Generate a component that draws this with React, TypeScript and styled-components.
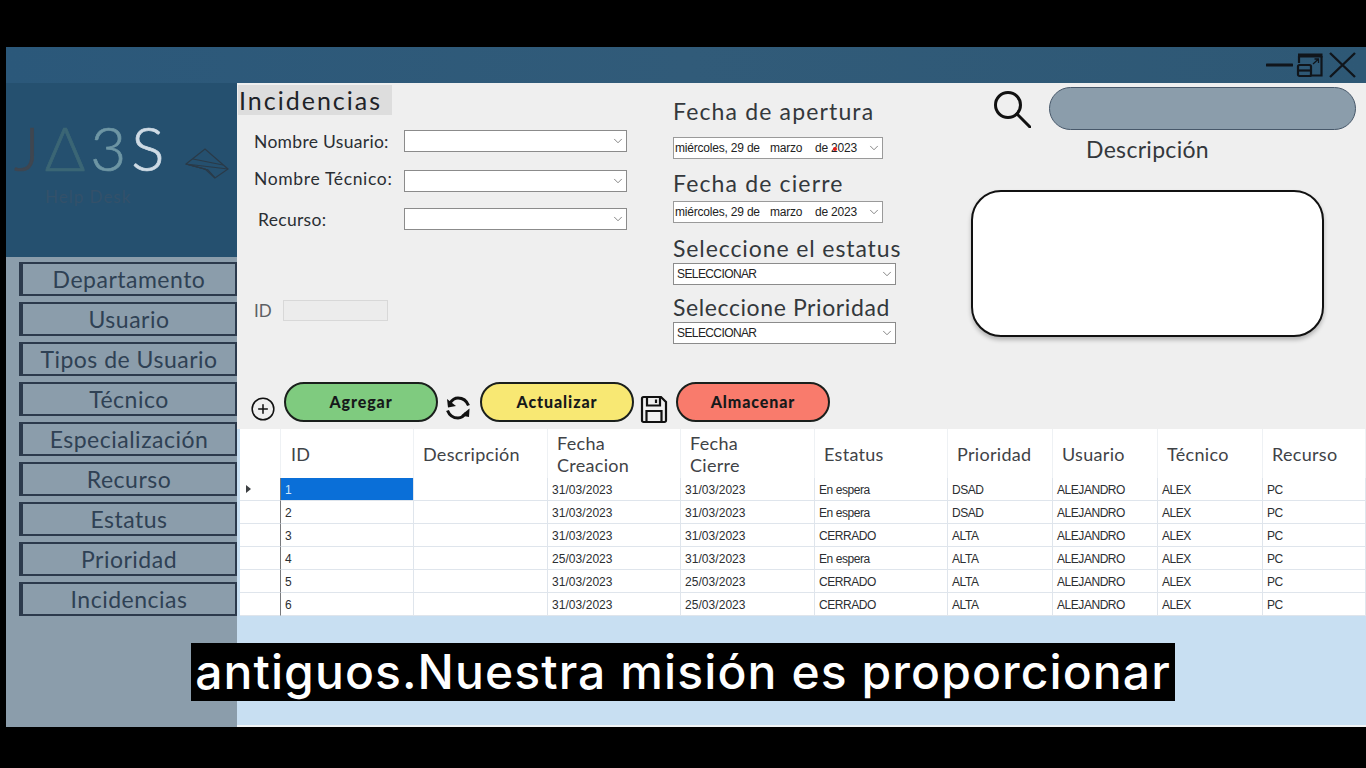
import React from 'react';
import styled, { createGlobalStyle } from 'styled-components';
import { ChevronDown, CirclePlus } from 'lucide-react';

const GlobalStyle = createGlobalStyle`
  html, body {
    margin: 0;
    padding: 0;
    background: #000;
    overflow: hidden;
  }
  * {
    box-sizing: border-box;
  }
`;

const gothic = `Lato, "Open Sans", sans-serif`;
const arial = `"Liberation Sans", Arial, sans-serif`;

const Screen = styled.div`
  position: relative;
  width: 1366px;
  height: 768px;
  padding: 47px 0 41px 6px;
  background: #000;
`;

const Window = styled.div`
  display: flex;
  flex-direction: column;
  height: 100%;
  background: #efefef;
`;

const TitleBar = styled.div`
  display: flex;
  align-items: center;
  justify-content: flex-end;
  gap: 3px;
  height: 36px;
  padding-right: 9px;
  background: linear-gradient(90deg, #2b587a, #315b79 50%, #2e5875);
`;

const Body = styled.div`
  display: flex;
  flex: 1;
  min-height: 0;
`;

const Sidebar = styled.aside`
  display: flex;
  flex-direction: column;
  width: 231px;
  flex: none;
  background: #8b9dab;
`;

const LogoPanel = styled.div`
  display: flex;
  flex-direction: column;
  height: 174px;
  padding: 34px 0 0 8px;
  background: #25506f;
`;

const LogoRow = styled.div`
  display: flex;
  align-items: flex-start;
  gap: 16px;
`;

const LogoWord = styled.div`
  display: flex;
  font-family: ${gothic};
  font-size: 62px;
  font-weight: 300;
  line-height: 60px;
  letter-spacing: 5px;
  -webkit-text-stroke: 0.7px currentColor;
`;

const LogoLetter = styled.span<{ $color: string }>`
  color: ${(p) => p.$color};
`;

const PlaneSlot = styled.span`
  margin-top: 31px;
`;

const LogoTagline = styled.div`
  margin: 3px 0 0 31px;
  color: #33516a;
  font-family: ${gothic};
  font-size: 17px;
  line-height: 20px;
  letter-spacing: 1px;
`;

const Menu = styled.nav`
  display: flex;
  flex-direction: column;
  gap: 6px;
  padding: 5px 0 0 13px;
`;

const MenuButton = styled.div`
  display: flex;
  align-items: center;
  justify-content: center;
  height: 34px;
  border: 2px solid #2c3a4c;
  border-left-width: 4px;
  color: #2f4154;
  background: #8b9dab;
  font-family: ${gothic};
  font-size: 23px;
  letter-spacing: 0.5px;
`;

const Main = styled.main`
  display: flex;
  flex: 1;
  flex-direction: column;
  min-width: 0;
`;

const TopArea = styled.div`
  display: flex;
  height: 297px;
`;

const LeftColumn = styled.section`
  width: 436px;
  flex: none;
`;

const PageTitle = styled.h1`
  display: flex;
  align-items: center;
  width: 154px;
  height: 30px;
  margin: 2px 0 0 1px;
  padding-left: 1px;
  color: #1e2328;
  background: #dddddd;
  font-family: ${gothic};
  font-size: 25px;
  font-weight: 400;
  letter-spacing: 2px;
`;

const Fields = styled.div`
  display: flex;
  flex-direction: column;
  padding: 15px 0 0 17px;
`;

const FieldRow = styled.div<{ $top: number }>`
  display: grid;
  grid-template-columns: 150px 223px;
  grid-template-rows: 22px;
  align-items: center;
  margin-top: ${(p) => p.$top}px;
`;

const FieldLabel = styled.label<{ $indent?: number; $raise?: number; $spacing?: number }>`
  margin-bottom: ${(p) => p.$raise ?? 0}px;
  padding-left: ${(p) => p.$indent ?? 0}px;
  color: #2a2e33;
  font-family: ${gothic};
  font-size: 17.5px;
  letter-spacing: ${(p) => p.$spacing ?? 0.3}px;
  white-space: nowrap;
`;

const Combo = styled.div`
  display: flex;
  align-items: center;
  justify-content: space-between;
  height: 22px;
  padding: 0 1px 0 2px;
  border: 1px solid #8b8b8b;
  color: #222;
  background: #fff;
  font-family: ${arial};
  font-size: 12px;
  letter-spacing: -0.6px;
  white-space: nowrap;
`;

const IdRow = styled.div`
  display: flex;
  align-items: center;
  gap: 11px;
  margin: 70px 0 0 0;
`;

const IdLabel = styled.label`
  color: #5d6064;
  font-family: ${gothic};
  font-size: 17px;
`;

const IdInput = styled.div`
  width: 105px;
  height: 21px;
  border: 1px solid #d8d8d8;
  background: #ececec;
`;

const MiddleColumn = styled.section`
  position: relative;
  display: flex;
  flex-direction: column;
  align-items: flex-start;
  width: 298px;
  flex: none;
`;

const SectionLabel = styled.div<{ $top: number; $spacing?: number }>`
  margin-top: ${(p) => p.$top}px;
  color: #34383c;
  font-family: ${gothic};
  font-size: 23px;
  line-height: 28px;
  letter-spacing: ${(p) => p.$spacing ?? 1.15}px;
  white-space: nowrap;
`;

const DateBox = styled(Combo)<{ $top: number }>`
  width: 210px;
  margin-top: ${(p) => p.$top}px;
  padding-left: 1px;
  border-color: #9a9a9a;
  letter-spacing: -0.2px;
`;

const DateParts = styled.span`
  display: grid;
  grid-template-columns: 95px 45px auto;
`;

const SelectBox = styled(Combo)`
  width: 223px;
  margin-top: 1px;
  padding-left: 3px;
`;

const CursorDot = styled.span`
  position: absolute;
  left: 160px;
  top: 64px;
  width: 4px;
  height: 4px;
  border-radius: 50%;
  background: #e21b1b;
`;

const RightColumn = styled.section`
  display: flex;
  flex-direction: column;
  flex: 1;
`;

const SearchRow = styled.div`
  display: flex;
  align-items: center;
  gap: 18px;
  margin: 4px 0 0 22px;
`;

const SearchField = styled.div`
  width: 307px;
  height: 43px;
  border: 1px solid #47586a;
  border-radius: 22px;
  background: #8b9dab;
`;

const DescriptionTitle = styled.div`
  width: 353px;
  margin-top: 6px;
  color: #34383c;
  text-align: center;
  font-family: ${gothic};
  font-size: 23px;
  line-height: 27px;
  letter-spacing: 0.3px;
`;

const DescriptionBox = styled.div`
  width: 353px;
  height: 147px;
  margin-top: 27px;
  border: 2px solid #111;
  border-radius: 30px;
  background: #fff;
  box-shadow: 0 3px 4px rgba(0, 0, 0, 0.25);
`;

const Actions = styled.div`
  display: flex;
  align-items: flex-start;
  height: 49px;
  padding: 2px 0 0 13px;
  flex: none;
`;

const ActionIcon = styled.span<{ $width: number; $top: number; $left: number; $right: number }>`
  display: flex;
  justify-content: center;
  width: ${(p) => p.$width}px;
  margin: ${(p) => p.$top}px ${(p) => p.$right}px 0 ${(p) => p.$left}px;
  color: #111;
`;

const ActionButton = styled.div<{ $bg: string }>`
  display: flex;
  align-items: center;
  justify-content: center;
  width: 154px;
  height: 40px;
  padding-bottom: 1px;
  border: 2px solid #1a1f1c;
  border-radius: 20px;
  color: #16191a;
  background: ${(p) => p.$bg};
  font-family: ${gothic};
  font-size: 16px;
  font-weight: 900;
  letter-spacing: 0.9px;
`;

const GridArea = styled.div`
  display: flex;
  flex: 1;
  flex-direction: column;
  padding-left: 3px;
  background: #c8dff2;
  border-bottom: 2px solid #f1f4f6;
`;

const Table = styled.div`
  display: grid;
  grid-template-columns: 41px 133px 134px 133px 134px 133px 105px 105px 105px 103px;
  background: #fff;
`;

const HeadCell = styled.div<{ $inset: number }>`
  display: flex;
  align-items: center;
  height: 49px;
  padding-left: ${(p) => p.$inset}px;
  border-right: 1px solid #eef1f4;
  color: #3f4347;
  font-family: ${gothic};
  font-size: 18px;
  line-height: 22px;
  letter-spacing: 0.3px;
`;

const RowHeader = styled.div`
  display: flex;
  align-items: center;
  height: 23px;
  padding-left: 6px;
  border-right: 1px solid #77797c;
  border-bottom: 1px solid #dfe5ec;
`;

const Arrow = styled.span`
  width: 0;
  height: 0;
  border-top: 4px solid transparent;
  border-bottom: 4px solid transparent;
  border-left: 5px solid #3c3f42;
`;

const Cell = styled.div<{ $selected?: boolean; $date?: boolean }>`
  display: flex;
  align-items: center;
  height: 23px;
  padding: 1px 0 0 4px;
  border-right: 1px solid #dfe5ec;
  border-bottom: 1px solid #dfe5ec;
  color: ${(p) => (p.$selected ? '#cfe6fb' : '#2b2e31')};
  background: ${(p) => (p.$selected ? '#0a6fd8' : '#fff')};
  font-family: ${arial};
  font-size: 12px;
  letter-spacing: ${(p) => (p.$date ? 0.05 : -0.45)}px;
  white-space: nowrap;
`;

const Caption = styled.div`
  position: absolute;
  left: 191px;
  top: 643px;
  display: flex;
  align-items: center;
  justify-content: center;
  width: 984px;
  height: 58px;
  padding-bottom: 2px;
  color: #fff;
  background: #000;
  font-family: Inter, Lato, sans-serif;
  font-size: 48px;
  font-weight: 500;
  letter-spacing: 1.1px;
  white-space: nowrap;
`;

const menuItems = [
  'Departamento',
  'Usuario',
  'Tipos de Usuario',
  'Técnico',
  'Especialización',
  'Recurso',
  'Estatus',
  'Prioridad',
  'Incidencias',
];

const headers: { label: React.ReactNode; inset: number }[] = [
  { label: '', inset: 0 },
  { label: 'ID', inset: 10 },
  { label: 'Descripción', inset: 9 },
  { label: <>Fecha<br />Creacion</>, inset: 9 },
  { label: <>Fecha<br />Cierre</>, inset: 9 },
  { label: 'Estatus', inset: 9 },
  { label: 'Prioridad', inset: 9 },
  { label: 'Usuario', inset: 9 },
  { label: 'Técnico', inset: 9 },
  { label: 'Recurso', inset: 9 },
];

const rows = [
  ['1', '', '31/03/2023', '31/03/2023', 'En espera', 'DSAD', 'ALEJANDRO', 'ALEX', 'PC'],
  ['2', '', '31/03/2023', '31/03/2023', 'En espera', 'DSAD', 'ALEJANDRO', 'ALEX', 'PC'],
  ['3', '', '31/03/2023', '31/03/2023', 'CERRADO', 'ALTA', 'ALEJANDRO', 'ALEX', 'PC'],
  ['4', '', '25/03/2023', '31/03/2023', 'En espera', 'ALTA', 'ALEJANDRO', 'ALEX', 'PC'],
  ['5', '', '31/03/2023', '25/03/2023', 'CERRADO', 'ALTA', 'ALEJANDRO', 'ALEX', 'PC'],
  ['6', '', '31/03/2023', '25/03/2023', 'CERRADO', 'ALTA', 'ALEJANDRO', 'ALEX', 'PC'],
];

const Chevron: React.FC = () => <ChevronDown size={14} strokeWidth={1.2} color="#555" />;

const DateValue: React.FC = () => (
  <DateParts>
    <span>miércoles, 29 de</span>
    <span>marzo</span>
    <span>de 2023</span>
  </DateParts>
);

const WindowControls: React.FC = () => (
  <>
    <svg width="27" height="28" viewBox="0 0 27 28" fill="none">
      <path d="M1 14h25" stroke="#10151b" strokeWidth="3" strokeLinecap="round" />
    </svg>
    <svg width="28" height="28" viewBox="0 0 28 28" fill="none" stroke="#10151b" strokeWidth="2.2">
      <path d="M3 12V5M25.500 5v19.500H15" />
      <path d="M2 4.500h24.500" strokeWidth="4" />
      <rect x="2" y="14" width="13" height="11" rx="1.5" />
      <path d="M2 19.500h13" />
      <path d="M17 13l5-4.500M18.500 8H22.500V12" strokeWidth="1.3" />
    </svg>
    <svg width="30" height="28" viewBox="0 0 30 28" fill="none">
      <path d="M3 2l25 24M28 2L3 26" stroke="#10151b" strokeWidth="2.4" />
    </svg>
  </>
);

const PaperPlane: React.FC = () => (
  <svg width="44" height="32" viewBox="0 0 44 32" fill="none" stroke="#2a3a48" strokeWidth="1.2">
    <path d="M1 16L20 1l23 20-13 9-7-8z" />
    <path d="M1 16l42 5M1 16l22 6M8 11l30 6" />
    <path d="M1 16l19 5 10 9" />
  </svg>
);

const SearchGlyph: React.FC = () => (
  <svg width="38" height="38" viewBox="0 0 38 38" fill="none" stroke="#111" strokeWidth="3">
    <circle cx="15" cy="15" r="12.5" />
    <path d="M24 24l13 13" strokeLinecap="round" />
  </svg>
);

const RefreshGlyph: React.FC = () => (
  <svg width="26" height="28" viewBox="0 0 26 28" fill="none" stroke="#111" strokeWidth="3">
    <path d="M23.500 11.500C21.500 6.500 17.500 4 13 4 9.500 4 7 6 5 9" />
    <path d="M2 5l1 8.500 8-1.500z" fill="#111" stroke="none" />
    <path d="M2.500 16.500C4.500 21.500 8.500 24 13 24c3.500 0 6-2 8-5" />
    <path d="M24.500 14.500l-.5 8.500-8-1.500z" fill="#111" stroke="none" />
  </svg>
);

const SaveGlyph: React.FC = () => (
  <svg width="28" height="30" viewBox="0 0 28 30" fill="none" stroke="#111" strokeWidth="2.2">
    <path d="M2 4.500A1.500 1.500 0 0 1 3.500 3H21l5 5v18.500a1.500 1.500 0 0 1-1.500 1.500h-21A1.500 1.500 0 0 1 2 26.500z" />
    <path d="M7 3v8.500h13V3M16 5.500V9" />
    <path d="M6.500 28V17h15v11" />
  </svg>
);

const App: React.FC = () => (
  <>
    <GlobalStyle />
    <Screen>
      <Window>
        <TitleBar>
          <WindowControls />
        </TitleBar>
        <Body>
          <Sidebar>
            <LogoPanel>
              <LogoRow>
                <LogoWord>
                  <LogoLetter $color="#3f4650">J</LogoLetter>
                  <LogoLetter $color="#3b6675">Δ</LogoLetter>
                  <LogoLetter $color="#6e96a4">3</LogoLetter>
                  <LogoLetter $color="#cfdbe5">S</LogoLetter>
                </LogoWord>
                <PlaneSlot>
                  <PaperPlane />
                </PlaneSlot>
              </LogoRow>
              <LogoTagline>Help Desk</LogoTagline>
            </LogoPanel>
            <Menu>
              {menuItems.map((item) => (
                <MenuButton key={item}>{item}</MenuButton>
              ))}
            </Menu>
          </Sidebar>
          <Main>
            <TopArea>
              <LeftColumn>
                <PageTitle>Incidencias</PageTitle>
                <Fields>
                  <FieldRow $top={0}>
                    <FieldLabel>Nombre Usuario:</FieldLabel>
                    <Combo>
                      <span />
                      <Chevron />
                    </Combo>
                  </FieldRow>
                  <FieldRow $top={18}>
                    <FieldLabel $raise={6} $spacing={0.65}>
                      Nombre Técnico:
                    </FieldLabel>
                    <Combo>
                      <span />
                      <Chevron />
                    </Combo>
                  </FieldRow>
                  <FieldRow $top={16}>
                    <FieldLabel $indent={4}>Recurso:</FieldLabel>
                    <Combo>
                      <span />
                      <Chevron />
                    </Combo>
                  </FieldRow>
                  <IdRow>
                    <IdLabel>ID</IdLabel>
                    <IdInput />
                  </IdRow>
                </Fields>
              </LeftColumn>
              <MiddleColumn>
                <SectionLabel $top={14}>Fecha de apertura</SectionLabel>
                <DateBox $top={12}>
                  <DateValue />
                  <Chevron />
                </DateBox>
                <CursorDot />
                <SectionLabel $top={10}>Fecha de cierre</SectionLabel>
                <DateBox $top={4}>
                  <DateValue />
                  <Chevron />
                </DateBox>
                <SectionLabel $top={11} $spacing={0.9}>
                  Seleccione el estatus
                </SectionLabel>
                <SelectBox>
                  SELECCIONAR
                  <Chevron />
                </SelectBox>
                <SectionLabel $top={8} $spacing={0.6}>
                  Seleccione Prioridad
                </SectionLabel>
                <SelectBox>
                  SELECCIONAR
                  <Chevron />
                </SelectBox>
              </MiddleColumn>
              <RightColumn>
                <SearchRow>
                  <SearchGlyph />
                  <SearchField />
                </SearchRow>
                <DescriptionTitle>Descripción</DescriptionTitle>
                <DescriptionBox />
              </RightColumn>
            </TopArea>
            <Actions>
              <ActionIcon $width={26} $top={14} $left={0} $right={8}>
                <CirclePlus size={26} strokeWidth={1.4} />
              </ActionIcon>
              <ActionButton $bg="#7fcb7f">Agregar</ActionButton>
              <ActionIcon $width={26} $top={12} $left={7} $right={9}>
                <RefreshGlyph />
              </ActionIcon>
              <ActionButton $bg="#f8e873">Actualizar</ActionButton>
              <ActionIcon $width={28} $top={12} $left={6} $right={8}>
                <SaveGlyph />
              </ActionIcon>
              <ActionButton $bg="#f97b6c">Almacenar</ActionButton>
            </Actions>
            <GridArea>
              <Table>
                {headers.map((header, i) => (
                  <HeadCell key={i} $inset={header.inset}>
                    {header.label}
                  </HeadCell>
                ))}
                {rows.map((row, r) => (
                  <React.Fragment key={row[0]}>
                    <RowHeader>{r === 0 && <Arrow />}</RowHeader>
                    {row.map((value, c) => (
                      <Cell key={c} $selected={r === 0 && c === 0} $date={c === 2 || c === 3}>
                        {value}
                      </Cell>
                    ))}
                  </React.Fragment>
                ))}
              </Table>
            </GridArea>
          </Main>
        </Body>
      </Window>
      <Caption>antiguos.Nuestra misión es proporcionar</Caption>
    </Screen>
  </>
);

export default App;
